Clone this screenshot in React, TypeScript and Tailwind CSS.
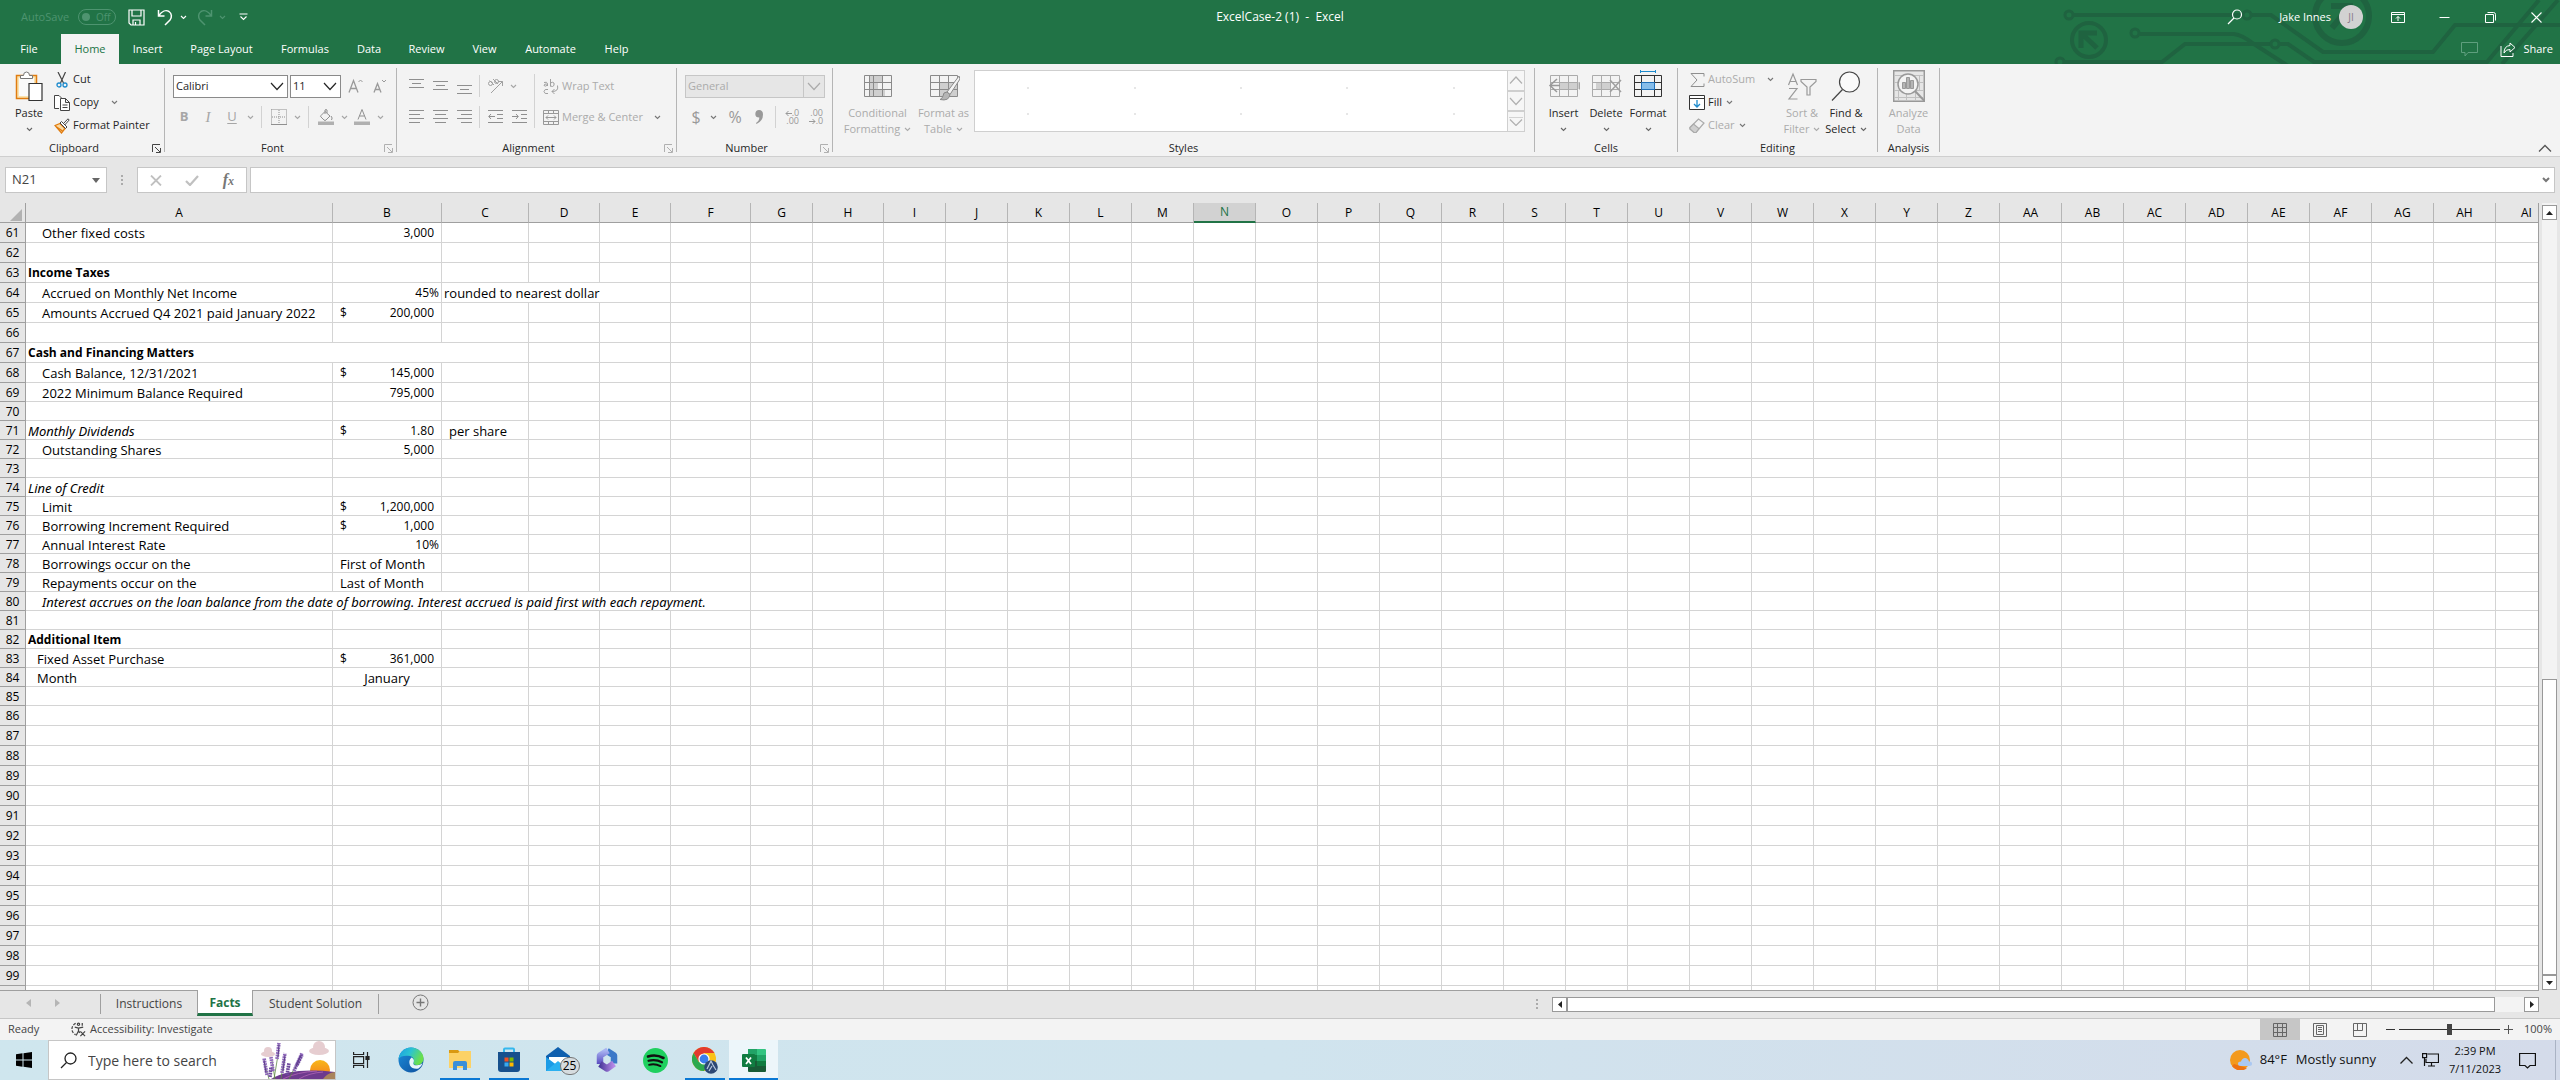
import React from 'react';
import clsx from 'clsx';

/* ---------- shared bits ---------- */

const Caret: React.FC<{ className?: string }> = ({ className }) => (
  <svg viewBox="0 0 7 5" className={clsx('h-[5px] w-[7px] shrink-0', className)} fill="none" stroke="currentColor" strokeWidth="1.1">
    <path d="M1 1l2.5 2.5L6 1" />
  </svg>
);

const CaretButton: React.FC<{ label: string; className?: string }> = ({ label, className }) => (
  <button aria-label={label} className={clsx('flex h-6 w-3 shrink-0 items-center justify-center', className)}>
    <Caret />
  </button>
);

const IconButton: React.FC<{ label: string; children: React.ReactNode; className?: string }> = ({ label, children, className }) => (
  <button aria-label={label} className={clsx('flex h-6 w-6 shrink-0 items-center justify-center', className)}>
    {children}
  </button>
);

const Divider: React.FC<{ className?: string }> = ({ className }) => (
  <div className={clsx('h-[22px] w-px shrink-0 bg-[#d2d2d2]', className)} />
);

interface GroupProps {
  title: string;
  width: string;
  launcher?: 'dark' | 'light';
  children: React.ReactNode;
}

const Group: React.FC<GroupProps> = ({ title, width, launcher, children }) => (
  <section aria-label={title} className={clsx('flex h-full shrink-0', width)}>
    <div className="flex min-w-0 flex-1 flex-col">
      <div className="flex h-[75px] shrink-0">{children}</div>
      <div className="flex h-[17px] items-center pt-px">
        <span className="flex-1 text-center leading-4 text-[#262626]">{title}</span>
        {launcher && (
          <button aria-label={`${title} settings`} className="mr-[3px] ml-1">
            <svg viewBox="0 0 9 9" className={clsx('h-[9px] w-[9px]', launcher === 'dark' ? 'text-[#444]' : 'text-[#b0b0b0]')} fill="none" stroke="currentColor">
              <path d="M.5 8V.5H8M3 3l5 5M8.5 4v4.5H4" />
            </svg>
          </button>
        )}
      </div>
    </div>
    <div className="my-1 w-px bg-[#b5b5b5]" />
  </section>
);

interface BigButtonProps {
  lines: string[];
  icon: React.ReactNode;
  width: string;
  caret?: boolean;
  disabled?: boolean;
}

const BigButton: React.FC<BigButtonProps> = ({ lines, icon, width, caret = true, disabled }) => (
  <button disabled={disabled} className={clsx('flex flex-col items-center pt-[6px]', width, disabled ? 'text-[#ababab]' : 'text-[#262626]')}>
    <span className="flex h-8 items-center justify-center">{icon}</span>
    <span className="mt-[3px] whitespace-nowrap leading-4">{lines[0]}</span>
    <span className="flex h-4 items-center gap-1 whitespace-nowrap leading-4">
      {lines[1]}
      {caret && <Caret className={disabled ? 'text-[#ababab]' : 'text-[#666]'} />}
    </span>
  </button>
);

const ComboBox: React.FC<{ label: string; value: string; width: string; disabled?: boolean }> = ({ label, value, width, disabled }) => (
  <div className={clsx('relative flex h-[23px] shrink-0 border', width, disabled ? 'border-[#c6c6c6] bg-[#e6e6e6] text-[#ababab]' : 'border-[#8a8a8a] bg-white text-[#262626]')}>
    <select aria-label={label} disabled={disabled} className="w-full appearance-none bg-transparent pl-[2px] outline-none">
      <option>{value}</option>
    </select>
    <span className={clsx('pointer-events-none absolute inset-y-0 right-0 flex w-[21px] items-center justify-center', disabled && 'border-l border-[#c6c6c6]')}>
      <svg viewBox="0 0 14 9" className="h-[9px] w-[14px]" fill="none" stroke="currentColor" strokeWidth="1.2">
        <path d="M1 1l6 6.500l6-6.500" />
      </svg>
    </span>
  </div>
);

/* ---------- title bar ---------- */

const Circuit = () => (
  <svg viewBox="2050 0 510 64" className="absolute right-0 top-0 h-16 w-[510px]" fill="none" stroke="#1f6340" strokeWidth="4">
    <circle cx="2069" cy="15" r="4" strokeWidth="3" />
    <path d="M2074 15H2242M2252 15h19l52 37h110l22-27h105" />
    <circle cx="2247" cy="15" r="4" strokeWidth="3" />
    <circle cx="2135" cy="33" r="4" strokeWidth="3" />
    <path d="M2140 34h94q8 1 20 10l34 22" />
    <circle cx="2060" cy="62" r="4" strokeWidth="3" />
    <path d="M2065 62h97l23-18h85" />
    <circle cx="2275" cy="44" r="4" strokeWidth="3" />
    <path d="M2280 44h8l26 18h173l52-62M2502 64l56-64" />
    <circle cx="2089" cy="40" r="17" />
    <path d="M2081 48V33h16M2081 33l16 15" strokeWidth="5" />
    <circle cx="2342" cy="16" r="27" strokeWidth="6" />
    <path d="M2331 6h19v20M2350 6l-18 22" strokeWidth="6" />
  </svg>
);

const TitleBar = () => (
  <div className="relative flex h-[34px] items-center text-white">
    <div className="flex items-center pl-[21px] text-[#4e9470]">
      <span className="w-[57px]">AutoSave</span>
      <button role="switch" aria-checked="false" aria-label="AutoSave" className="flex h-4 w-[38px] items-center gap-[6px] rounded-full border border-[#4e9470] pl-[3px] text-[10px]">
        <span className="h-2 w-2 rounded-full bg-[#4e9470]" />
        Off
      </button>
    </div>
    <button aria-label="Save" className="ml-3">
      <svg viewBox="0 0 17 17" className="h-[17px] w-[17px]" fill="none" stroke="currentColor" strokeWidth="1.2">
        <path d="M1 1h15v15H3l-2-2zM4 1v6h9V1M5 16v-5h7v5M7.500 13v3" />
      </svg>
    </button>
    <button aria-label="Undo" className="ml-3">
      <svg viewBox="0 0 16 17" className="h-[17px] w-4" fill="none" stroke="currentColor" strokeWidth="1.500">
        <path d="M1.500 1v6h6M2 6.500C5 2 9 .8 12 2.500c3 2 3 6 1 8.500L8 16" />
      </svg>
    </button>
    <CaretButton label="Undo history" className="ml-1" />
    <button aria-label="Redo" className="ml-2 text-[#4e9470]">
      <svg viewBox="0 0 16 17" className="h-[17px] w-4" fill="none" stroke="currentColor" strokeWidth="1.500">
        <path d="M14.500 1v6h-6M14 6.500C11 2 7 .8 4 2.500c-3 2-3 6-1 8.500l5 5" />
      </svg>
    </button>
    <CaretButton label="Redo history" className="ml-[3px] text-[#4e9470]" />
    <button aria-label="Customize Quick Access Toolbar" className="ml-[11px]">
      <svg viewBox="0 0 9 8" className="h-2 w-[9px]" fill="none" stroke="currentColor" strokeWidth="1.100">
        <path d="M.5 1h8M1.500 3.500l3 3l3-3" />
      </svg>
    </button>
    <h1 className="pointer-events-none absolute inset-x-0 text-center text-[12px] whitespace-pre">{'ExcelCase-2 (1)  -  Excel'}</h1>
    <div className="ml-auto flex items-center pr-[18px]">
      <button aria-label="Search" className="mr-9">
        <svg viewBox="0 0 16 16" className="h-4 w-4" fill="none" stroke="currentColor" strokeWidth="1.200">
          <circle cx="10" cy="5.500" r="4.500" />
          <path d="M7 9l-6 6" />
        </svg>
      </button>
      <button className="flex items-center gap-2">
        <span>Jake Innes</span>
        <span className="flex h-6 w-6 items-center justify-center rounded-full bg-[#d2d2d2] text-[10px] text-[#8a7a8c]">JI</span>
      </button>
      <button aria-label="Ribbon Display Options" className="ml-7">
        <svg viewBox="0 0 14 11" className="h-[11px] w-[14px]" fill="none" stroke="currentColor">
          <path d="M.5.5h13v10H.5zM.5 2.500h13M7 9V4.500M5 6.500l2-2l2 2" />
        </svg>
      </button>
      <button aria-label="Minimize" className="ml-[34px]">
        <svg viewBox="0 0 11 11" className="h-[11px] w-[11px]" stroke="currentColor">
          <path d="M.5 5.500h10" />
        </svg>
      </button>
      <button aria-label="Restore" className="ml-[35px]">
        <svg viewBox="0 0 11 11" className="h-[11px] w-[11px]" fill="none" stroke="currentColor">
          <path d="M.5 2.500h8v8h-8zM2.500.5h6q2 0 2 2v6" />
        </svg>
      </button>
      <button aria-label="Close" className="ml-[35px]">
        <svg viewBox="0 0 11 11" className="h-[11px] w-[11px]" stroke="currentColor" strokeWidth="1.100">
          <path d="M.5.5l10 10M10.500.5l-10 10" />
        </svg>
      </button>
    </div>
  </div>
);

const RIBBON_TABS = [
  { name: 'File', width: 'w-[61px] pr-[3px]' },
  { name: 'Home', width: 'w-[58px]' },
  { name: 'Insert', width: 'w-[57px]' },
  { name: 'Page Layout', width: 'w-[91px]' },
  { name: 'Formulas', width: 'w-[76px]' },
  { name: 'Data', width: 'w-[52px]' },
  { name: 'Review', width: 'w-[63px]' },
  { name: 'View', width: 'w-[53px]' },
  { name: 'Automate', width: 'w-[79px]' },
  { name: 'Help', width: 'w-[53px]' },
];

const RibbonTabs = () => (
  <nav className="relative flex h-[30px] text-white">
    {RIBBON_TABS.map(({ name, width }) => (
      <button key={name} className={clsx('shrink-0', width, name === 'Home' && 'bg-[#f3f3f3] text-[#217346]')}>
        {name}
      </button>
    ))}
    <div className="ml-auto flex items-center pr-[7px]">
      <button aria-label="Comments" className="mr-[22px] text-[#5f9f7e]">
        <svg viewBox="0 0 17 15" className="h-[15px] w-[17px]" fill="none" stroke="currentColor">
          <path d="M.5.5h16v10H7l-3 3.500v-3.500H.5z" />
        </svg>
      </button>
      <button className="flex items-center gap-[7px]">
        <svg viewBox="0 0 16 15" className="h-[15px] w-4" fill="none" stroke="currentColor">
          <path d="M1 4v10.500h12V11M10 1l5 4.500L10 10V7.500q-4-.5-6 3.500q0-7 6-7.500z" />
        </svg>
        Share
      </button>
    </div>
  </nav>
);

/* ---------- ribbon icons ---------- */

const PasteIcon = () => (
  <svg viewBox="0 0 28 30" className="h-[30px] w-7" fill="none">
    <path d="M1.500 4.500h20v23h-20z" fill="#fbe3ae" stroke="#e07c10" strokeWidth="1.500" />
    <path d="M4 7h15v18H4z" fill="#fafafa" />
    <path d="M5.500 7.500V4.500h3q0-3.500 3-3.500t3 3.500h3v3z" fill="#fff" stroke="#777" />
    <path d="M14 12.500h13v17H14z" fill="#fff" stroke="#333" strokeWidth="1.200" />
  </svg>
);

const CutIcon = () => (
  <svg viewBox="0 0 12 16" className="h-4 w-3" fill="none">
    <path d="M2 0l5.500 11M9.500 0L4.500 11" stroke="#444" strokeWidth="1.200" />
    <circle cx="3" cy="13" r="2" stroke="#1e8bcd" strokeWidth="1.300" />
    <circle cx="9" cy="13" r="2" stroke="#1e8bcd" strokeWidth="1.300" />
  </svg>
);

const CopyIcon = () => (
  <svg viewBox="0 0 16 16" className="h-4 w-4" fill="#fff" stroke="#444">
    <path d="M5 13.500H.5V.5H5L7.500 3" />
    <path d="M6.500 3.500h5l4 4v8h-9zM11.500 3.500v4h4M8.500 10h5M8.500 12.500h5" />
  </svg>
);

const BrushIcon = () => (
  <svg viewBox="0 0 16 16" className="h-4 w-4" fill="none">
    <path d="M1 7.500l5-2l5 5l-3.500 4.500z" fill="#fbd9a0" stroke="#e07c10" strokeWidth="1.300" />
    <path d="M2.500 9l6 4" stroke="#e07c10" strokeWidth="1.500" />
    <path d="M6 5l1.500-1.500l5.500 5.500l-1.500 1.500zM9.500 5.500L14 .8l1.200 1.200l-4.500 5" fill="#fff" stroke="#444" />
  </svg>
);

const AlignIcon: React.FC<{ d: string }> = ({ d }) => (
  <svg viewBox="0 0 15 14" className="h-[14px] w-[15px]" fill="none" stroke="#8f8f8f">
    <path d={d} />
  </svg>
);

const GridIcon: React.FC<{ fill?: string; stroke?: string; children?: React.ReactNode }> = ({ fill, stroke = '#8a8a8a', children }) => (
  <svg viewBox="0 0 32 32" className="h-8 w-8" fill="none" stroke={stroke}>
    {fill && <path d={fill} fill="#cfcfcf" stroke="none" />}
    <path d="M2.500 5.500h27v21h-27zM2.500 12.500h27M2.500 19.500h27M11.500 5.500v21M20.500 5.500v21" />
    {children}
  </svg>
);

const SmallButton: React.FC<{ children: React.ReactNode; icon: React.ReactNode; disabled?: boolean; caret?: string }> = ({ children, icon, disabled, caret }) => (
  <button disabled={disabled} className={clsx('flex h-[23px] items-center whitespace-nowrap', disabled ? 'text-[#ababab]' : 'text-[#262626]')}>
    <span className="mr-[3px] flex w-4 shrink-0 justify-center">{icon}</span>
    {children}
    {caret && <Caret className={clsx('text-[#777]', caret)} />}
  </button>
);

/* ---------- ribbon ---------- */

const Ribbon = () => (
  <div className="flex h-[93px] border-b border-[#cfcfcf] bg-[#f3f3f3]">
    <Group title="Clipboard" width="w-[165px]" launcher="dark">
      <BigButton lines={['Paste']} width="ml-1 w-[50px]" icon={<PasteIcon />} />
      <div className="flex flex-col pt-1">
        <SmallButton icon={<CutIcon />}>Cut</SmallButton>
        <SmallButton icon={<CopyIcon />} caret="ml-3">Copy</SmallButton>
        <SmallButton icon={<BrushIcon />}>Format Painter</SmallButton>
      </div>
    </Group>

    <Group title="Font" width="w-[232px]" launcher="light">
      <div className="flex flex-col gap-[7px] pt-[10px] pl-[7px] text-[#a6a6a6]">
        <div className="flex h-6 items-center">
          <ComboBox label="Font name" value="Calibri" width="w-[115px] ml-px" />
          <ComboBox label="Font size" value="11" width="w-[51px] ml-[2px]" />
          <IconButton label="Increase font size" className="ml-[3px]">
            <svg viewBox="0 0 16 16" className="h-4 w-4" fill="none" stroke="#999" strokeWidth="1.300">
              <path d="M1 14.500L5.500 2.500L10 14.500M2.500 10.500h6" />
              <path d="M10.500 4l2-2l2 2" strokeWidth="1" />
            </svg>
          </IconButton>
          <IconButton label="Decrease font size">
            <svg viewBox="0 0 16 16" className="h-4 w-4" fill="none" stroke="#999" strokeWidth="1.300">
              <path d="M2 14.500L5.500 5.500L9 14.500M3.500 11.500h4" />
              <path d="M10 2l2 2l2-2" strokeWidth="1" />
            </svg>
          </IconButton>
        </div>
        <div className="flex h-6 items-center">
          <IconButton label="Bold" className="text-[13px] font-bold">B</IconButton>
          <IconButton label="Italic" className="font-['Liberation_Serif',serif] text-[15px] italic">I</IconButton>
          <IconButton label="Underline" className="text-[13px] underline underline-offset-2">U</IconButton>
          <CaretButton label="Underline style" />
          <Divider className="mx-[5px]" />
          <IconButton label="Borders">
            <svg viewBox="0 0 16 16" className="h-4 w-4" fill="none" stroke="#8f8f8f">
              <path d="M.5.5h15v15M.5.5v15M8 1v14M1 8h14" strokeDasharray="1 1" />
              <path d="M0 15.500h16" />
            </svg>
          </IconButton>
          <CaretButton label="Border style" />
          <Divider className="mx-[5px]" />
          <IconButton label="Fill color">
            <svg viewBox="0 0 16 16" className="h-4 w-4" fill="none" stroke="#8f8f8f">
              <path d="M3 6.500l4-4l5 4.500l-4 4q-1 1-2 0L3 8q-1-1 0-1.500zM7 5V1q1-1 2 0v3M13 7q2 2 .5 4" />
              <path d="M0 12.500h16v3.500H0z" fill="#b0b0b0" stroke="none" />
            </svg>
          </IconButton>
          <CaretButton label="Fill color options" />
          <IconButton label="Font color">
            <svg viewBox="0 0 16 16" className="h-4 w-4" fill="none" stroke="#8f8f8f">
              <path d="M4 10.500L8 .5l4 10M5.500 7h5" />
              <path d="M0 12.500h16v3.500H0z" fill="#b0b0b0" stroke="none" />
            </svg>
          </IconButton>
          <CaretButton label="Font color options" />
        </div>
      </div>
    </Group>

    <Group title="Alignment" width="w-[280px]" launcher="light">
      <div className="flex flex-col gap-[7px] pt-[10px] pl-[7px] text-[#a6a6a6]">
        <div className="flex h-6 items-center">
          <IconButton label="Top align" className="pb-1"><AlignIcon d="M0 2.500h15M3 6.500h9M0 10.500h15" /></IconButton>
          <IconButton label="Middle align"><AlignIcon d="M0 2.500h15M3 6.500h9M0 10.500h15" /></IconButton>
          <IconButton label="Bottom align" className="pt-2"><AlignIcon d="M0 2.500h15M3 6.500h9M0 10.500h15" /></IconButton>
          <Divider className="mx-[3px]" />
          <IconButton label="Orientation">
            <svg viewBox="0 0 17 16" className="h-4 w-[17px]" fill="none" stroke="#a0a0a0">
              <circle cx="3.500" cy="5.500" r="2" />
              <path d="M2.500 2.500l4.500 4.500M6 1l5 5M4 15L15.500 3.500M11 3.500h4.500V8" />
              <circle cx="9.500" cy="3.500" r="2" />
            </svg>
          </IconButton>
          <CaretButton label="Orientation options" />
        </div>
        <div className="flex h-6 items-center">
          <IconButton label="Align left"><AlignIcon d="M0 .5h15M0 4.500h11M0 8.500h15M0 12.500h11" /></IconButton>
          <IconButton label="Center"><AlignIcon d="M0 .5h15M2 4.500h11M0 8.500h15M2 12.500h11" /></IconButton>
          <IconButton label="Align right"><AlignIcon d="M0 .5h15M4 4.500h11M0 8.500h15M4 12.500h11" /></IconButton>
          <Divider className="mx-[3px]" />
          <IconButton label="Decrease indent"><AlignIcon d="M0 .5h15M9 4.500h6M9 8.500h6M0 12.500h15M7 6.500H1M3 4L.7 6.500L3 9" /></IconButton>
          <IconButton label="Increase indent"><AlignIcon d="M0 .5h15M9 4.500h6M9 8.500h6M0 12.500h15M0 6.500h6M4 4l2.300 2.500L4 9" /></IconButton>
        </div>
      </div>
      <div className="mt-[10px] ml-[3px] h-[54px] w-px bg-[#d2d2d2]" />
      <div className="flex flex-col gap-[8px] pt-[11px] pl-[8px]">
        <SmallButton
          disabled
          icon={
            <svg viewBox="0 0 16 16" className="h-4 w-4" fill="none" stroke="#a0a0a0">
              <path d="M1 3.500q3-1 3.500 1V7M4.500 5Q1 4.500 1 6.500q1.500 1.500 3.500-.5M7.500 0v7.500M7.500 4q2-1.500 3.500 0q.8 3-1.500 3.500L7.500 7" />
              <path d="M5 10.500Q1.500 9.500 1 12.500q.5 3 4 2M14.500 6.500q1.500 6-5.500 6M11.500 10L9 12.500l2.500 2.500" />
            </svg>
          }
        >
          Wrap Text
        </SmallButton>
        <SmallButton
          disabled
          caret="ml-[11px]"
          icon={
            <svg viewBox="0 0 16 15" className="h-[15px] w-4" fill="none" stroke="#999">
              <path d="M.5.5h15v14H.5zM.5 3.500h15M.5 11.500h15M5.500.5v3M10.500.5v3M5.500 11.500v3M10.500 11.500v3" />
              <path d="M3 7.500h10M5 5.500l-2 2l2 2M11 5.500l2 2l-2 2" />
            </svg>
          }
        >
          Merge &amp; Center
        </SmallButton>
      </div>
    </Group>

    <Group title="Number" width="w-[156px]" launcher="light">
      <div className="flex flex-col gap-[7px] pt-[10px] pl-2 text-[#999]">
        <div className="flex h-6 items-center">
          <ComboBox label="Number format" value="General" width="w-[140px]" disabled />
        </div>
        <div className="flex h-6 items-center">
          <IconButton label="Accounting format" className="w-[22px] text-[16px]">$</IconButton>
          <CaretButton label="Currency options" className="text-[#777]" />
          <IconButton label="Percent style" className="ml-1 text-[16px]">%</IconButton>
          <IconButton label="Comma style">
            <svg viewBox="0 0 8 14" className="h-[14px] w-2" fill="#999">
              <path d="M4 0q4 0 4 4.500Q8 11 1.500 14l-.5-1q3.500-2.500 3.300-5.500Q.3 7.500.3 4Q.5 0 4 0z" />
            </svg>
          </IconButton>
          <Divider className="mx-1" />
          <IconButton label="Increase decimal" className="flex-col text-[9px] leading-[8px]">
            <span className="flex items-center">
              <svg viewBox="0 0 7 7" className="h-[7px] w-[7px]" fill="none" stroke="#999"><path d="M7 3.500H1M3.500 1L1 3.500L3.500 6" /></svg>
              .0
            </span>
            <span className="self-end pr-[5px]">.00</span>
          </IconButton>
          <IconButton label="Decrease decimal" className="flex-col text-[9px] leading-[8px]">
            <span className="self-end pr-[5px]">.00</span>
            <span className="flex items-center">
              <svg viewBox="0 0 7 7" className="h-[7px] w-[7px]" fill="none" stroke="#999"><path d="M0 3.500h6M3.500 1L6 3.500L3.500 6" /></svg>
              .0
            </span>
          </IconButton>
        </div>
      </div>
    </Group>

    <Group title="Styles" width="w-[702px]">
      <BigButton
        disabled
        lines={['Conditional', 'Formatting']}
        width="ml-[9px] w-[71px]"
        icon={
          <GridIcon fill="M8 5h12v7H8zM8 12h8v7H8zM8 19h15v7H8z">
            <path d="M7.500 5.500v21" />
          </GridIcon>
        }
      />
      <BigButton
        disabled
        lines={['Format as', 'Table']}
        width="w-[61px]"
        icon={
          <GridIcon fill="M12 12h17v14H12z">
            <path d="M31 6l-12 16l3 2.500L32 9z" fill="#f3f3f3" />
            <path d="M19 22q-4 0-4 4q-1 3-3 3.500q9 2 10-5z" fill="#b5b5b5" />
          </GridIcon>
        }
      />
      <div className="mt-[6px] mr-[9px] flex h-[62px] flex-1 border border-[#cfcfcf] bg-white">
        <div className="grid flex-1 grid-cols-5 grid-rows-2 py-1">
          {Array.from({ length: 10 }, (_, i) => (
            <span key={i} className="m-auto h-[2px] w-[2px] bg-[#e6e6e6]" />
          ))}
        </div>
        <div className="flex w-[17px] flex-col divide-y-2 divide-[#cfcfcf] border-l border-[#cfcfcf] bg-[#f6f6f6]">
          {['M1 7.500L7 1l6 6.500', 'M1 1l6 6.500L13 1', 'M0 0h14M1 2.500L7 8.500l6-6'].map((d) => (
            <button key={d} aria-label="Scroll styles" className="flex flex-1 items-center justify-center">
              <svg viewBox="0 0 14 9" className="h-[9px] w-[14px]" fill="none" stroke="#b0b0b0" strokeWidth="1.200">
                <path d={d} />
              </svg>
            </button>
          ))}
        </div>
      </div>
    </Group>

    <Group title="Cells" width="w-[143px]">
      <BigButton
        lines={['Insert']}
        width="ml-[7px] w-[43px]"
        icon={
          <GridIcon fill="M11 12h21v7H11z" stroke="#ababab">
            <path d="M32 12.500v7M9 9l-7 6.500l7 6.500M2 15.500h10" stroke="#999" strokeWidth="1.500" />
          </GridIcon>
        }
      />
      <BigButton
        lines={['Delete']}
        width="w-[42px]"
        icon={
          <GridIcon fill="M6 12h14v7H6z" stroke="#ababab">
            <path d="M20 10l11 12M31 10L20 22" stroke="#a0a0a0" strokeWidth="1.500" />
          </GridIcon>
        }
      />
      <BigButton
        lines={['Format']}
        width="w-[42px]"
        icon={
          <svg viewBox="0 0 32 32" className="h-8 w-8" fill="none" stroke="#333">
            <path d="M2.500 5.500h27v21h-27zM2.500 12.500h27M2.500 19.500h27M9.500 5.500v21M22.500 5.500v21" />
            <path d="M9.500 12.500h13v7h-13z" fill="#86bdea" stroke="#1e6fb8" />
            <path d="M8.500 0v3M23.500 0v3M8.500 1.500h15" stroke="#1e8bcd" />
          </svg>
        }
      />
    </Group>

    <Group title="Editing" width="w-[200px]">
      <div className="flex w-[104px] flex-col pt-1 pl-[11px]">
        <SmallButton disabled caret="ml-3" icon={<AlignIcon d="M14 3.500V.5H1L7 7l-6 6.500h13v-3" />}>AutoSum</SmallButton>
        <SmallButton
          caret="ml-1"
          icon={
            <svg viewBox="0 0 16 15" className="h-[15px] w-4" fill="#fff" stroke="#333">
              <path d="M.5.5h15v14H.5zM.5 3.500h15" />
              <path d="M8 5v7M5 9l3 3l3-3" stroke="#1e8bcd" strokeWidth="1.300" fill="none" />
            </svg>
          }
        >
          Fill
        </SmallButton>
        <SmallButton
          disabled
          caret="ml-1"
          icon={
            <svg viewBox="0 0 16 16" className="h-4 w-4" fill="none" stroke="#ababab" strokeWidth="1.200">
              <path d="M1 9.500L9.500 1L15 5L7 14.500H5L1 11z" />
              <path d="M1 9.500L4.500 6L10 10.500L7 14.500H5L1 11z" fill="#cfcfcf" />
            </svg>
          }
        >
          Clear
        </SmallButton>
      </div>
      <BigButton
        disabled
        lines={['Sort &', 'Filter']}
        width="w-[40px]"
        icon={
          <svg viewBox="0 0 30 32" className="h-8 w-[30px]" fill="none" stroke="#999" strokeWidth="1.200">
            <path d="M1.500 15L6 4l4.500 11M3 11.500h6M2 18.500h8L2 29h8.500M14 9.500h15v2L23 17v8h-3v-8l-6-5.500z" />
          </svg>
        }
      />
      <BigButton
        lines={['Find &', 'Select']}
        width="w-[48px]"
        icon={
          <svg viewBox="0 0 30 32" className="h-8 w-[30px]" fill="none" stroke="#444" strokeWidth="1.200">
            <circle cx="18.500" cy="12" r="10" fill="#fafafa" />
            <path d="M11.500 19.500L1 30.500" />
          </svg>
        }
      />
    </Group>

    <Group title="Analysis" width="w-[62px]">
      <BigButton
        disabled
        caret={false}
        lines={['Analyze', 'Data']}
        width="w-full"
        icon={
          <svg viewBox="0 0 32 32" className="h-8 w-8" fill="#e6e6e6" stroke="#999">
            <path d="M.7.700h30.600v30.600H.7z" strokeWidth="1.500" />
            <path d="M1 5.500h30M1 12.500h30M1 20.500h30M1 27.500h30M5.500 20v11M13.500 20v11M22.500 20v11M26.500 5v16" stroke="#c0c0c0" />
            <circle cx="15" cy="14" r="10" fill="#f3f3f3" strokeWidth="1.500" />
            <path d="M22 21l9.500 10" strokeWidth="2" />
            <path d="M9.500 12.500h3v6h-3zM13.500 7.500h3v11h-3zM17.500 10.500h3v8h-3z" fill="#b5b5b5" />
          </svg>
        }
      />
    </Group>

    <button aria-label="Collapse the Ribbon" className="mt-auto mr-2 mb-1 ml-auto">
      <svg viewBox="0 0 14 8" className="h-2 w-[14px]" fill="none" stroke="#555" strokeWidth="1.300">
        <path d="M1 7.500l6-6l6 6" />
      </svg>
    </button>
  </div>
);

/* ---------- formula bar ---------- */

const Dots = () => (
  <div className="flex flex-col gap-[2px]">
    <span className="h-[2px] w-[2px] bg-[#ababab]" />
    <span className="h-[2px] w-[2px] bg-[#ababab]" />
    <span className="h-[2px] w-[2px] bg-[#ababab]" />
  </div>
);

const FormulaBar = () => (
  <div className="flex h-[46px] items-center bg-[#e6e6e6] px-[5px] text-[13px]">
    <div className="flex h-[26px] w-[102px] items-center border border-[#c6c6c6] bg-white pr-[6px]">
      <input aria-label="Name Box" defaultValue="N21" className="min-w-0 flex-1 bg-transparent pl-[6px] text-[#444] outline-none" />
      <svg viewBox="0 0 8 5" className="h-[5px] w-2" fill="#666"><path d="M0 0h8L4 5z" /></svg>
    </div>
    <div className="mr-[14px] ml-[14px]"><Dots /></div>
    <div className="flex h-[26px] w-[110px] items-center justify-between border border-[#c6c6c6] bg-white px-3">
      <button aria-label="Cancel">
        <svg viewBox="0 0 12 11" className="h-[11px] w-3" fill="none" stroke="#c0c0c0" strokeWidth="1.800"><path d="M1 .5l10 10M11 .5l-10 10" /></svg>
      </button>
      <button aria-label="Enter">
        <svg viewBox="0 0 14 11" className="h-[11px] w-[14px]" fill="none" stroke="#c0c0c0" strokeWidth="2.200"><path d="M1 6l4 4l8-9" /></svg>
      </button>
      <button aria-label="Insert Function" className="font-['Liberation_Serif',serif] text-[16px] leading-none font-bold text-[#777] italic">
        f<span className="text-[12px]">x</span>
      </button>
    </div>
    <div className="ml-[3px] flex h-[26px] flex-1 items-center border border-[#c6c6c6] bg-white pr-1">
      <input aria-label="Formula Bar" className="min-w-0 flex-1 bg-transparent px-2 outline-none" />
      <button aria-label="Expand Formula Bar">
        <svg viewBox="0 0 8 6" className="h-[6px] w-2" fill="none" stroke="#777" strokeWidth="2"><path d="M1 1l3 3l3-3" /></svg>
      </button>
    </div>
  </div>
);

/* ---------- sheet ---------- */

const COLUMNS = [
  ['A', 307], ['B', 109], ['C', 87], ['D', 71], ['E', 71], ['F', 80], ['G', 62], ['H', 71],
  ...'IJKLMNOPQRSTUVWXYZ'.split('').map((c) => [c, 62]),
  ...'ABCDEFGHI'.split('').map((c) => [`A${c}`, 62]),
] as [string, number][];

interface Cell {
  text: string;
  symbol?: string;
  span?: number;
  style?: string;
}

const ITALIC = "font-['Noto_Sans',sans-serif] text-[13px] italic";
const BOLD = 'pl-[2px] text-[12px] font-bold';

const money = (text: string, symbol?: string): Cell => ({ text, symbol, style: 'pl-[7px] pr-[7px] text-right text-[12px]' });
const line = (text: string): Cell => ({ text, style: 'pl-4 text-[13px]' });

const ROWS: Record<number, Cell[]> = {
  61: [line('Other fixed costs'), money('3,000')],
  63: [{ text: 'Income Taxes', style: BOLD }],
  64: [line('Accrued on Monthly Net Income'), { text: '45%', style: 'pr-[2px] text-right text-[12px]' }, { text: 'rounded to nearest dollar', span: 3, style: 'pl-[2px] text-[13px]' }],
  65: [line('Amounts Accrued Q4 2021 paid January 2022'), money('200,000', '$')],
  67: [{ text: 'Cash and Financing Matters', span: 3, style: BOLD }],
  68: [line('Cash Balance, 12/31/2021'), money('145,000', '$')],
  69: [line('2022 Minimum Balance Required'), money('795,000')],
  71: [{ text: 'Monthly Dividends', style: clsx('pl-[2px]', ITALIC) }, money('1.80', '$'), { text: 'per share', style: 'pl-[7px] text-[13px]' }],
  72: [line('Outstanding Shares'), money('5,000')],
  74: [{ text: 'Line of Credit', style: clsx('pl-[2px]', ITALIC) }],
  75: [line('Limit'), money('1,200,000', '$')],
  76: [line('Borrowing Increment Required'), money('1,000', '$')],
  77: [line('Annual Interest Rate'), { text: '10%', style: 'pr-[2px] text-right text-[12px]' }],
  78: [line('Borrowings occur on the'), { text: 'First of Month', style: 'pl-[7px] text-[13px]' }],
  79: [line('Repayments occur on the'), { text: 'Last of Month', style: 'pl-[7px] text-[13px]' }],
  80: [{ text: 'Interest accrues on the loan balance from the date of borrowing. Interest accrued is paid first with each repayment.', span: 6, style: clsx('pl-4', ITALIC) }],
  82: [{ text: 'Additional Item', style: BOLD }],
  83: [{ text: 'Fixed Asset Purchase', style: 'pl-[11px] text-[13px]' }, money('361,000', '$')],
  84: [{ text: 'Month', style: 'pl-[11px] text-[13px]' }, { text: 'January', style: 'text-center text-[13px]' }],
};

const ROW_NUMBERS = Array.from({ length: 39 }, (_, i) => 61 + i);

const SheetRow: React.FC<{ number?: number }> = ({ number = 0 }) => {
  const filled = ROWS[number] ?? [];
  const used = filled.reduce((n, c) => n + (c.span ?? 1), 0);
  const short = number > 68 && number < 86;
  return (
    <tr className={short ? 'h-[19px]' : 'h-5'}>
      <th scope="row" className="border-r border-b border-[#9f9f9f] bg-[#e6e6e6] p-0 pt-px text-center leading-4 font-normal">
        {number || null}
      </th>
      {filled.map((cell, i) => (
        <td key={i} colSpan={cell.span} className={clsx('border-r border-b border-[#d4d4d4] pt-px pb-0 leading-4 whitespace-nowrap', cell.style)}>
          {cell.symbol && <span className="float-left">{cell.symbol}</span>}
          {cell.text}
        </td>
      ))}
      {COLUMNS.slice(used).map(([name]) => (
        <td key={name} className="border-r border-b border-[#d4d4d4] p-0" />
      ))}
    </tr>
  );
};

const Sheet = () => (
  <div className="flex min-h-0 flex-1 bg-[#e6e6e6]">
    <div className="min-w-0 flex-1 overflow-hidden border-r border-[#9f9f9f]">
      <table className="w-max table-fixed border-separate border-spacing-0 bg-white text-[12px] text-black">
        <colgroup>
          <col style={{ width: 26 }} />
          {COLUMNS.map(([name, width]) => (
            <col key={name} style={{ width }} />
          ))}
        </colgroup>
        <thead>
          <tr className="h-5 leading-4">
            <th className="border-r border-b border-[#9f9f9f] bg-[#e6e6e6] p-0">
              <svg viewBox="0 0 12 12" className="mt-1 mr-[3px] ml-auto h-3 w-3" fill="#b2b2b2"><path d="M12 0v12H0z" /></svg>
            </th>
            {COLUMNS.map(([name]) => (
              <th
                key={name}
                scope="col"
                className={clsx(
                  'border-r border-r-[#b5b5b5] p-0 text-center font-normal',
                  name === 'N' ? 'border-b-2 border-b-[#217346] bg-[#d2d2d2] text-[#217346]' : 'border-b border-b-[#9f9f9f] bg-[#e6e6e6]'
                )}
              >
                {name}
              </th>
            ))}
          </tr>
        </thead>
        <tbody>
          {ROW_NUMBERS.map((n) => (
            <SheetRow key={n} number={n} />
          ))}
          <SheetRow />
        </tbody>
      </table>
    </div>
    <div className="mr-[3px] ml-[3px] flex w-[15px] flex-col bg-[#f3f3f3] pt-[2px]">
      <button aria-label="Scroll up" className="flex h-[15px] items-center justify-center border border-[#999] bg-white">
        <svg viewBox="0 0 7 4" className="h-1 w-[7px]" fill="#222"><path d="M3.500 0L7 4H0z" /></svg>
      </button>
      <div className="flex-[460]" />
      <div className="flex-[295] border border-b-2 border-[#999] bg-white" />
      <button aria-label="Scroll down" className="flex h-[14px] items-center justify-center border border-t-0 border-[#999] bg-white">
        <svg viewBox="0 0 7 4" className="h-1 w-[7px]" fill="#222"><path d="M0 0h7L3.500 4z" /></svg>
      </button>
    </div>
  </div>
);

/* ---------- sheet tabs and status bar ---------- */

const SheetTabs = () => (
  <div className="flex h-[29px] items-start border-b border-[#c6c6c6] bg-[#e6e6e6] text-[12px] text-[#444]">
    <div className="flex h-full min-w-0 flex-1 border-t border-[#9f9f9f]">
      <button aria-label="Previous sheet" className="mb-1 ml-[26px] flex w-[6px] items-center">
        <svg viewBox="0 0 5 8" className="h-2 w-[5px]" fill="#b5b5b5"><path d="M5 0v8L0 4z" /></svg>
      </button>
      <button aria-label="Next sheet" className="mb-1 ml-[23px] flex w-[6px] items-center">
        <svg viewBox="0 0 5 8" className="h-2 w-[5px]" fill="#b5b5b5"><path d="M0 0v8l5-4z" /></svg>
      </button>
      <div className="mt-[3px] ml-[39px] h-5 w-px shrink-0 bg-[#9f9f9f]" />
      <button className="h-[25px] w-[96px]">Instructions</button>
      <button className="-mt-px h-[26px] w-[56px] border-x border-b-[3px] border-x-[#9f9f9f] border-b-[#217346] bg-white pt-[2px] font-bold text-[#217346]">Facts</button>
      <button className="h-[25px] w-[125px]">Student Solution</button>
      <div className="mt-[3px] h-5 w-px shrink-0 bg-[#9f9f9f]" />
      <button aria-label="New sheet" className="mb-1 ml-[33px]">
        <svg viewBox="0 0 17 17" className="h-[17px] w-[17px]" fill="none" stroke="#777">
          <circle cx="8.500" cy="8.500" r="7.500" />
          <path d="M8.500 4.500v8M4.500 8.500h8" strokeWidth="1.400" />
        </svg>
      </button>
    </div>
    <div className="flex h-full w-[1003px] items-center border-t border-[#9f9f9f] pb-px">
      <Dots />
      <div className="ml-[14px] flex h-[15px] flex-1 bg-[#f3f3f3]">
        <button aria-label="Scroll left" className="flex w-[15px] items-center justify-center border border-[#999] bg-white">
          <svg viewBox="0 0 4 7" className="h-[7px] w-1" fill="#222"><path d="M4 0v7L0 3.500z" /></svg>
        </button>
        <div className="flex-[927] border border-[#999] bg-white" />
        <div className="flex-[29]" />
        <button aria-label="Scroll right" className="flex w-[15px] items-center justify-center border border-[#999] bg-white">
          <svg viewBox="0 0 4 7" className="h-[7px] w-1" fill="#222"><path d="M0 0v7l4-3.500z" /></svg>
        </button>
      </div>
    </div>
    <div className="w-[21px]" />
  </div>
);

const StatusBar = () => (
  <div className="flex h-[21px] items-center bg-[#f3f3f3] pl-2 text-[#444]">
    <span className="w-[63px]">Ready</span>
    <button className="flex items-center gap-1">
      <svg viewBox="0 0 16 16" className="h-[15px] w-[15px]" fill="none" stroke="#444" strokeWidth="1.300">
        <path d="M5 1.500A6.500 6.500 0 0 0 5 13.500" strokeDasharray="3 1.500" />
        <circle cx="8" cy="2.500" r="1.200" />
        <path d="M4 5.500l4 1l5-1M8 6.500v3l-2.500 5M8 9.500l1.500 2M10 10l5 5M15 10l-5 5M12 1v3" />
      </svg>
      Accessibility: Investigate
    </button>
    <div className="ml-auto flex h-full items-center">
      <button aria-label="Normal view" className="flex h-full w-10 items-center justify-center bg-[#c6c6c6]">
        <svg viewBox="0 0 14 14" className="h-[14px] w-[14px]" fill="none" stroke="#666"><path d="M.5.500h13v13H.5zM.5 4.500h13M.5 9.500h13M4.500.5v13M9.500.5v13" /></svg>
      </button>
      <button aria-label="Page Layout view" className="flex h-full w-10 items-center justify-center">
        <svg viewBox="0 0 14 14" className="h-[14px] w-[14px]" fill="none" stroke="#666"><path d="M.5.500h13v13H.5zM3.500 2.500h7v9h-7zM5 4.500h4M5 6.500h4M5 8.500h4" /></svg>
      </button>
      <button aria-label="Page Break Preview" className="flex h-full w-10 items-center justify-center">
        <svg viewBox="0 0 14 14" className="h-[14px] w-[14px]" fill="none" stroke="#666"><path d="M.5.500h13v13H.5zM.5 7.500h9V.5M4.500.5v7" /></svg>
      </button>
      <button aria-label="Zoom out" className="ml-[6px]">
        <svg viewBox="0 0 9 9" className="h-[9px] w-[9px]" stroke="#333"><path d="M0 4.500h9" /></svg>
      </button>
      <input
        type="range"
        aria-label="Zoom"
        defaultValue={50}
        className="mx-1 h-px w-[101px] appearance-none bg-[#333] [&::-webkit-slider-thumb]:h-[11px] [&::-webkit-slider-thumb]:w-[5px] [&::-webkit-slider-thumb]:appearance-none [&::-webkit-slider-thumb]:bg-[#444]"
      />
      <button aria-label="Zoom in">
        <svg viewBox="0 0 9 9" className="h-[9px] w-[9px]" stroke="#555"><path d="M0 4.500h9M4.500 0v9" /></svg>
      </button>
      <button className="w-[47px] pr-2 text-right">100%</button>
    </div>
  </div>
);

/* ---------- taskbar ---------- */

const LavenderArt = () => (
  <svg viewBox="0 0 74 38" className="h-[38px] w-[74px]">
    <defs>
      <linearGradient id="sun" x1="0" y1="0" x2="0" y2="1">
        <stop offset="0" stopColor="#f8b81a" />
        <stop offset="1" stopColor="#f4761c" />
      </linearGradient>
    </defs>
    <g fill="#e6cdd0">
      <ellipse cx="7" cy="13" rx="7" ry="3" />
      <circle cx="7" cy="10" r="4" />
      <ellipse cx="58" cy="10" rx="10" ry="4" />
      <circle cx="58" cy="6" r="6" />
    </g>
    <circle cx="59" cy="29" r="10" fill="url(#sun)" />
    <path d="M10 38Q30 26 74 31v7z" fill="#6d3a8e" />
    <path d="M74 31q-8 1-12 7h12z" fill="#a9845c" />
    <path d="M22 38q14-7 34-8M38 38q10-6 24-7" stroke="#a45cae" fill="none" />
    <path d="M8 38L4 24M13 38l5-30M20 38l3-20M28 38l11-22M14 38l-3-18" stroke="#5f8a45" strokeWidth=".8" fill="none" />
    <g fill="none" strokeWidth="3.600" strokeDasharray="1.800 .7">
      <path d="M6 34L3 17M16 18l2-16M21 32l3-20M33 30l8-18M12 30l-2-14" stroke="#8f68bb" />
      <path d="M9 36l1-10M26 34l2-12M36 24l5-10" stroke="#6f4a9e" />
    </g>
    <path d="M5 32L3 19M17 16l1-13M22 30l2-16M34 28l6-14" stroke="#5d3d8c" fill="none" />
  </svg>
);

const EdgeIcon = () => (
  <svg viewBox="0 0 26 26" className="h-[26px] w-[26px]">
    <defs>
      <linearGradient id="edgeTop" x1="0" y1="0" x2="1" y2=".4">
        <stop offset="0" stopColor="#1b9de2" />
        <stop offset=".5" stopColor="#2bc3d2" />
        <stop offset="1" stopColor="#6ae04a" />
      </linearGradient>
      <linearGradient id="edgeBottom" x1="0" y1="0" x2="1" y2="1">
        <stop offset="0" stopColor="#1b8fdc" />
        <stop offset="1" stopColor="#0f4e9c" />
      </linearGradient>
    </defs>
    <circle cx="13" cy="13" r="12.500" fill="url(#edgeBottom)" />
    <path d="M.5 12C1.500 4.500 7 .5 13 .5c7 0 12.500 5 12.500 11c0 4-3 6.500-6.500 6.500c-3 0-4-1.500-3.500-2.500C16.500 14 16 10 12 9C7 8 2 9 .5 12z" fill="url(#edgeTop)" />
    <path d="M15.500 15.500q-1 3 3.500 2.800q3 0 5.500-2q-1 3.500-4 5.200q-6 1-8.500-3q-2-5 1.500-8q3.500 2 2 5z" fill="#e8f5fa" />
  </svg>
);

const ExplorerIcon = () => (
  <svg viewBox="0 0 22 20" className="h-5 w-[22px]">
    <path d="M0 0h9l2 2v3H0z" fill="#d99a12" />
    <path d="M0 3h9l2-2h11v17H0z" fill="#fcd266" />
    <path d="M4 20v-7q0-2 2-2h10q2 0 2 2v7h-4v-4H8v4z" fill="#3a8fd8" />
  </svg>
);

const StoreIcon = () => (
  <svg viewBox="0 0 24 26" className="h-[26px] w-6">
    <path d="M7 6V2.500Q7 1.500 8 1.500h8q1 0 1 1V6" fill="none" stroke="#35b8ee" strokeWidth="2" />
    <path d="M1 5h22v17q0 3-3 3H4q-3 0-3-3z" fill="#17508d" />
    <path d="M7.500 10.500h4v4h-4z" fill="#f25022" />
    <path d="M12.500 10.500h4v4h-4z" fill="#7fba00" />
    <path d="M7.500 15.500h4v4h-4z" fill="#39a9ee" />
    <path d="M12.500 15.500h4v4h-4z" fill="#ffb900" />
  </svg>
);

const MailIcon = () => (
  <span className="relative">
    <svg viewBox="0 0 26 26" className="h-[26px] w-[26px]">
      <path d="M1 9L13 0l12 9v3H1z" fill="#0f5fae" />
      <path d="M4 10h18v8H4z" fill="#fff" />
      <path d="M1 10l12 9l12-9v14H1z" fill="#1c9be6" />
      <path d="M1 24l12-10l12 10z" fill="#2bb0f0" />
    </svg>
    <span className="absolute top-[10px] left-[15px] flex h-[18px] w-5 items-center justify-center rounded-full border border-[#777] bg-[#d6dcdf] text-[12px] leading-none text-black">25</span>
  </span>
);

const Microsoft365Icon = () => (
  <svg viewBox="0 0 22 26" className="h-[26px] w-[22px]" fill="none" strokeWidth="6.500" strokeLinejoin="round">
    <defs>
      <linearGradient id="m365a" x1="0" y1="0" x2="0" y2="1">
        <stop offset="0" stopColor="#a9b4f2" />
        <stop offset="1" stopColor="#5a4cc0" />
      </linearGradient>
      <linearGradient id="m365b" x1="0" y1="0" x2="1" y2="0">
        <stop offset="0" stopColor="#4a3a9c" />
        <stop offset="1" stopColor="#b98be8" />
      </linearGradient>
    </defs>
    <path d="M11 4l7 4.500v8" stroke="#3c78c8" />
    <path d="M12 3.500L4 8.500V17" stroke="url(#m365a)" />
    <path d="M4 17l7 4.500l7-5" stroke="url(#m365b)" />
  </svg>
);

const SpotifyIcon = () => (
  <svg viewBox="0 0 25 25" className="h-[25px] w-[25px]" fill="none" stroke="#111" strokeLinecap="round">
    <circle cx="12.500" cy="12.500" r="12.500" fill="#1fd05f" stroke="none" />
    <path d="M5 8.500q8-2.500 15.500 1.500" strokeWidth="2.600" />
    <path d="M5.500 12.800q7-2 13.500 1.500" strokeWidth="2.200" />
    <path d="M6 16.800q6-1.600 11.500 1.300" strokeWidth="1.800" />
  </svg>
);

const ChromeIcon = () => (
  <svg viewBox="0 0 26 27" className="h-[27px] w-[26px]">
    <circle cx="12" cy="12" r="12" fill="#fbc116" />
    <path d="M1.600 6A12 12 0 0 1 22.400 6H12L6.800 15z" fill="#e33b2e" />
    <path d="M1.600 6A12 12 0 0 0 12 24l5.200-9L6.800 15z" fill="#2da94f" />
    <circle cx="12" cy="12" r="5.600" fill="#fff" />
    <circle cx="12" cy="12" r="4.400" fill="#3b7ded" />
    <circle cx="19" cy="20" r="6.800" fill="#2c4874" />
    <path d="M15 22l4-8l2 4l3 5M17 24l3-5" stroke="#b9c9de" strokeWidth="1.200" fill="none" />
  </svg>
);

const ExcelIcon = () => (
  <svg viewBox="0 0 24 23" className="h-[23px] w-6">
    <path d="M6 0h9v6H6z" fill="#21a366" />
    <path d="M15 0h8q1 0 1 1v5h-9z" fill="#33c481" />
    <path d="M6 6h9v6H6z" fill="#107c41" />
    <path d="M15 6h9v6h-9z" fill="#21a366" />
    <path d="M6 12h18v10q0 1-1 1H7q-1 0-1-1z" fill="#185c37" />
    <path d="M15 12h9v5h-9z" fill="#107c41" />
    <rect y="5" width="13" height="13" rx="1" fill="#107c41" />
    <path d="M4 8.500l5 6.500M9 8.500l-5 6.500" stroke="#fff" strokeWidth="1.800" />
  </svg>
);

const APPS = [
  { name: 'Microsoft Edge', icon: <EdgeIcon /> },
  { name: 'File Explorer', icon: <ExplorerIcon />, open: true },
  { name: 'Microsoft Store', icon: <StoreIcon />, open: true },
  { name: 'Mail', icon: <MailIcon /> },
  { name: 'Microsoft 365', icon: <Microsoft365Icon /> },
  { name: 'Spotify', icon: <SpotifyIcon /> },
  { name: 'Google Chrome', icon: <ChromeIcon />, open: true },
  { name: 'Excel', icon: <ExcelIcon />, open: true, active: true },
];

const Taskbar = () => (
  <footer className="flex h-10 shrink-0 items-center bg-linear-to-r from-[#cfe6ee] via-[#d0e4ee] to-[#d4dbea] text-[#111]">
    <button aria-label="Start" className="flex h-full w-12 items-center justify-center">
      <svg viewBox="0 0 16 16" className="h-4 w-4"><path d="M0 2.200l6.500-.9v6.200H0zM7.500 1.200L16 0v7.500H7.500zM0 8.500h6.500v6.200L0 13.800zM7.500 8.500H16V16l-8.500-1.200z" /></svg>
    </button>
    <label className="flex h-full w-[288px] items-center border border-[#c6c6c6] bg-white">
      <svg viewBox="0 0 17 17" className="ml-[11px] h-[17px] w-[17px] shrink-0" fill="none" stroke="#222" strokeWidth="1.300">
        <circle cx="10.500" cy="6.500" r="5.500" />
        <path d="M6.500 10.500L1 16" />
      </svg>
      <input aria-label="Search" placeholder="Type here to search" className="ml-[11px] min-w-0 flex-1 bg-transparent text-[14px] outline-none placeholder:text-[#444]" />
      <LavenderArt />
    </label>
    <button aria-label="Task View" className="flex h-full w-[50px] items-center justify-center">
      <svg viewBox="0 0 17 16" className="h-4 w-[17px]" fill="none" stroke="#222" strokeWidth="1.200">
        <path d="M.6 0v2.500h10V0M.6 4.600h10v7H.6zM.6 16v-2.500h10V16M14.500 0v4M14.500 8v8" />
        <path d="M13 4.500h3v3h-3z" fill="#222" />
      </svg>
    </button>
    {APPS.map(({ name, icon, open, active }) => (
      <button key={name} aria-label={name} className={clsx('flex h-full w-[49px] flex-col items-center', active && 'bg-[#edf6fa]')}>
        <span className="flex flex-1 items-center pt-[2px]">{icon}</span>
        <span className={clsx('h-[2px]', active ? 'w-full' : 'w-10', open && 'bg-[#0a78d4]')} />
      </button>
    ))}
    <div className="ml-auto flex h-full items-center">
      <button className="flex items-center text-[13px]">
        <svg viewBox="0 0 22 20" className="mr-2 h-5 w-[22px]">
          <circle cx="10" cy="10" r="10" fill="#f39a1e" />
          <path d="M2 16a10 10 0 0 0 15 2L4 14z" fill="#ee7212" />
          <path d="M11 16q-3 0-3-2.200T11 11.500Q12 8 15 8t4 3.500q3 0 3 2.300T19 16z" fill="#aac8f2" />
        </svg>
        <span className="mr-[9px]">84°F</span>
        <span>Mostly sunny</span>
      </button>
      <button aria-label="Show hidden icons" className="ml-6">
        <svg viewBox="0 0 13 8" className="h-2 w-[13px]" fill="none" stroke="#222" strokeWidth="1.300"><path d="M.5 7.500l6-6l6 6" /></svg>
      </button>
      <button aria-label="Network" className="ml-[9px]">
        <svg viewBox="0 0 17 14" className="h-[14px] w-[17px]" fill="none" stroke="#111" strokeWidth="1.200">
          <path d="M5.500 1h11v8.500H4V6M.6.6h4v4h-4zM2.500 4.600V13M6 13h7M9.500 9.500V13" />
        </svg>
      </button>
      <time dateTime="2023-07-11T14:39" className="ml-[9px] flex w-[54px] flex-col items-center text-[11px] leading-[18px]">
        <span>2:39 PM</span>
        <span>7/11/2023</span>
      </time>
      <button aria-label="Notifications" className="ml-[17px]">
        <svg viewBox="0 0 17 17" className="h-[17px] w-[17px]" fill="none" stroke="#111" strokeWidth="1.200"><path d="M.6 1.500h15.800v12h-5.400L8.500 16L6 13.500H.6z" /></svg>
      </button>
      <div className="mr-1 ml-[19px] h-full w-px bg-[#aab3c4]" />
    </div>
  </footer>
);

const App: React.FC = () => (
  <div className="flex h-screen flex-col overflow-hidden bg-[#e6e6e6] font-['Open_Sans','Noto_Sans',sans-serif] text-[11px]">
    <header className="relative bg-[#217346]">
      <Circuit />
      <TitleBar />
      <RibbonTabs />
    </header>
    <Ribbon />
    <FormulaBar />
    <Sheet />
    <SheetTabs />
    <StatusBar />
    <Taskbar />
  </div>
);

export default App;
